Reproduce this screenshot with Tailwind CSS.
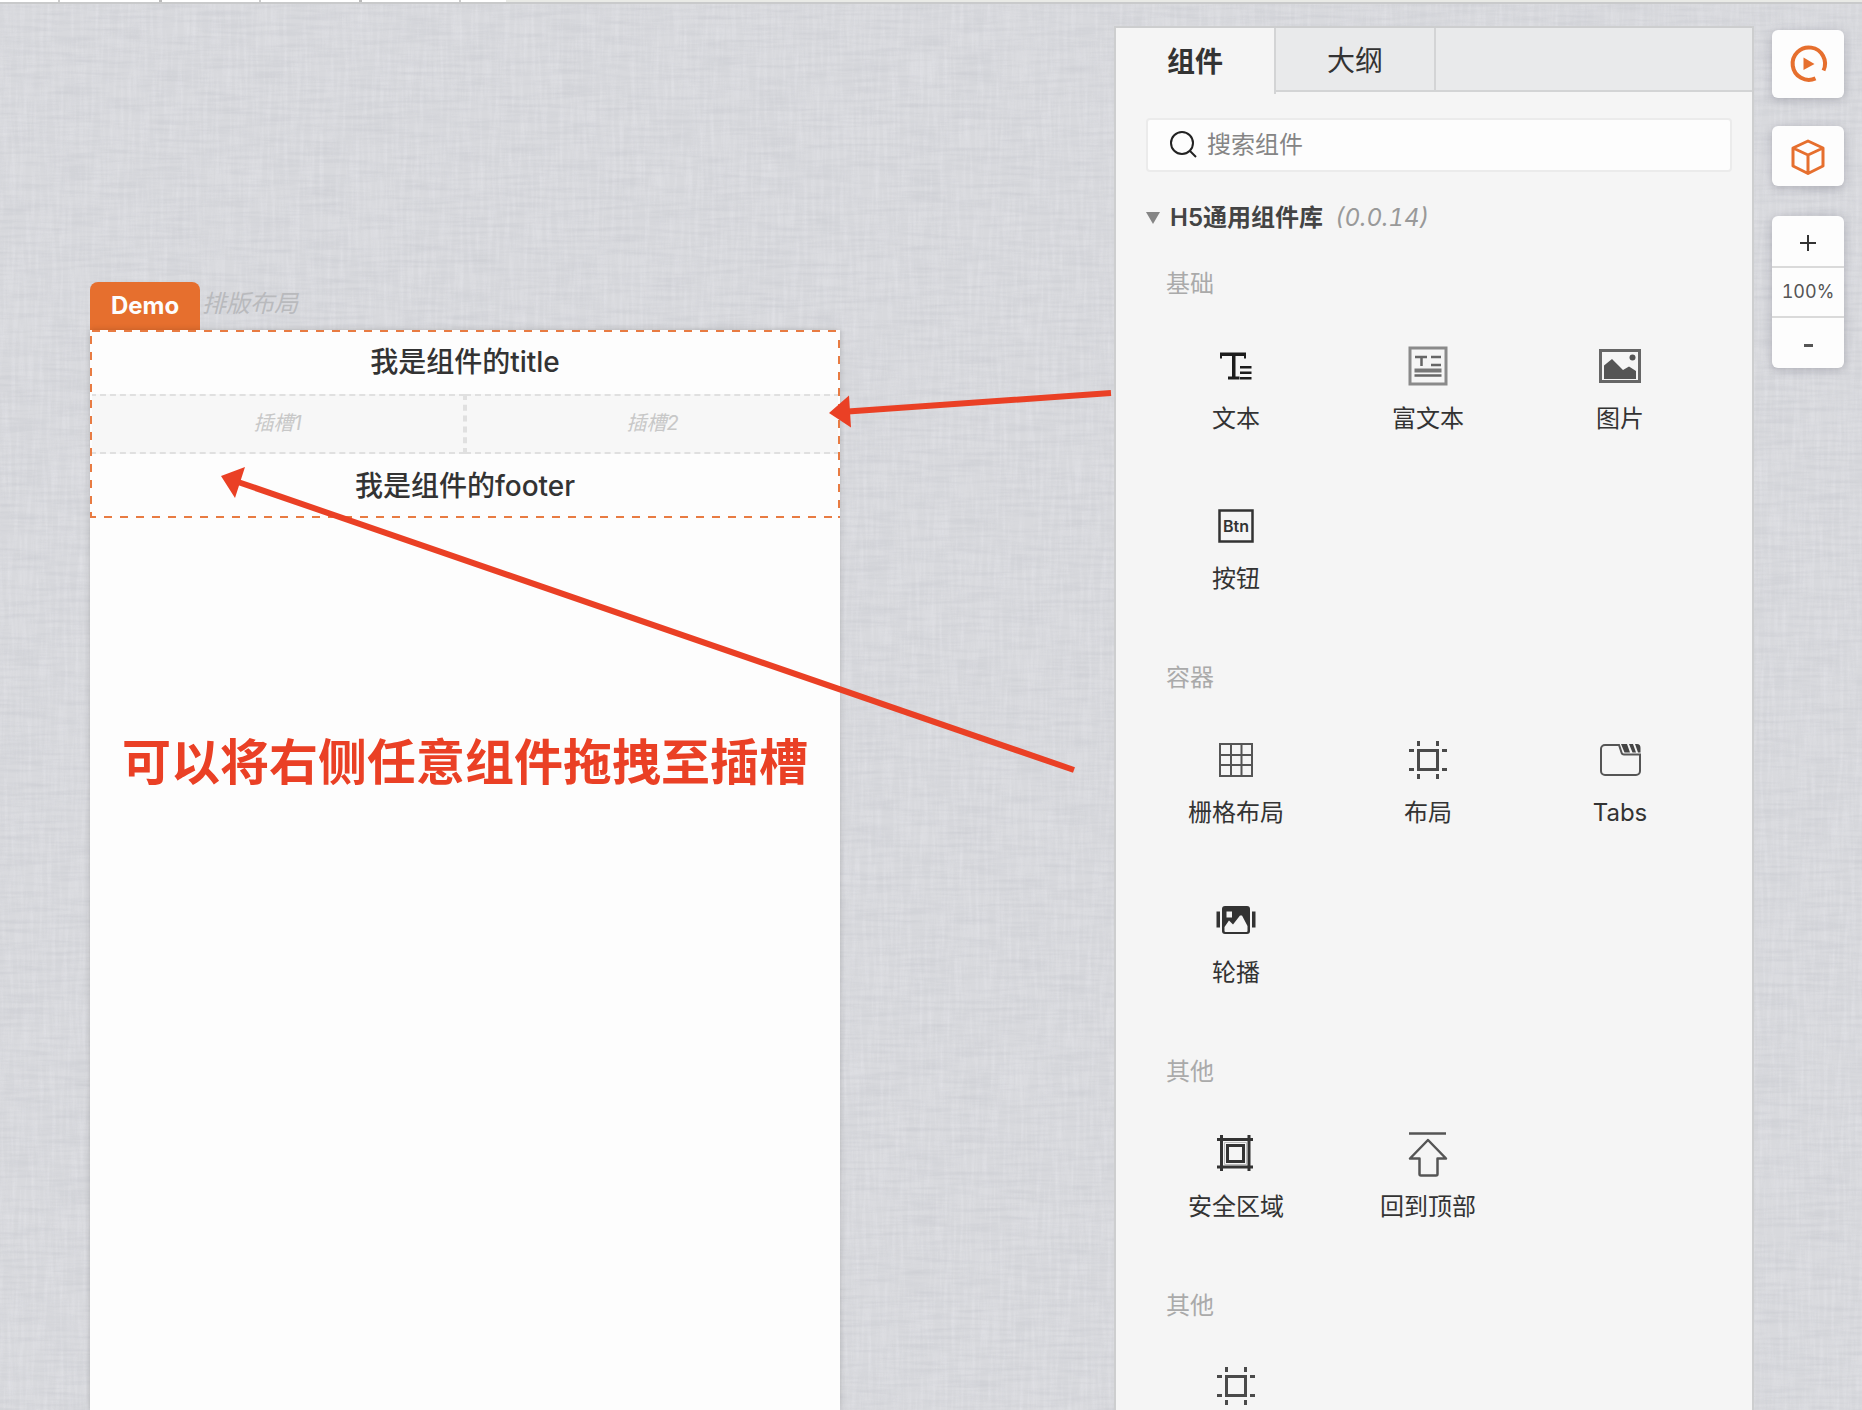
<!DOCTYPE html>
<html lang="zh-CN">
<head>
<meta charset="utf-8">
<title>Demo</title>
<script src="https://cdn.jsdelivr.net/npm/@tailwindcss/browser@4"></script>
</head>
<body class="relative h-screen min-h-[900px] overflow-hidden bg-[#d8d9dd] font-['Inter','Noto_Sans_CJK_SC',sans-serif] text-[#333]">

<!-- linen texture of the canvas -->
<svg class="absolute inset-0 size-full" aria-hidden="true" color-interpolation-filters="sRGB">
  <filter id="weft" x="0" y="0" width="100%" height="100%"><feTurbulence type="fractalNoise" baseFrequency="0.02 0.25" numOctaves="3" seed="4"/><feColorMatrix values="0 0 0 0 0.66  0 0 0 0 0.67  0 0 0 0 0.71  0.9 0 0 0 -0.35"/></filter>
  <filter id="warp" x="0" y="0" width="100%" height="100%"><feTurbulence type="fractalNoise" baseFrequency="0.25 0.02" numOctaves="3" seed="9"/><feColorMatrix values="0 0 0 0 0.95  0 0 0 0 0.95  0 0 0 0 0.97  0.9 0 0 0 -0.35"/></filter>
  <rect width="100%" height="100%" filter="url(#warp)" opacity="0.6"/>
  <rect width="100%" height="100%" filter="url(#weft)" opacity="0.4"/>
</svg>

<svg class="hidden">
  <symbol id="i-layout" viewBox="0 0 48 48"><g fill="none" stroke="#4a4a4a" stroke-width="3"><path d="M14.500 14.500h19v19h-19z"/><path d="M14.500 5v5M33.500 5v5M14.500 38v5M33.500 38v5M5 14.500h5M38 14.500h5M5 33.500h5M38 33.500h5"/></g></symbol>
</svg>

<div class="relative flex h-full flex-col">
  <header class="flex h-1 shrink-0 border-b-2 border-[#c9cacb] bg-[#e9eae6]">
    <div class="flex w-[506px] bg-white pl-[58px]">
      <i class="w-[101px] border-l-2 border-[#ccc]"></i><i class="w-[100px] border-l-3 border-[#bbb]"></i><i class="w-[100px] border-l-2 border-[#ccc]"></i><i class="w-[100px] border-l-3 border-[#bbb]"></i><i class="border-l-2 border-[#ccc]"></i>
    </div>
  </header>

  <div class="flex min-h-0 grow justify-between pr-[18px] pl-[90px]">
    <main class="flex w-[750px] shrink-0 flex-col pt-[278px]">
      <div class="flex h-12 shrink-0 items-center gap-0.5">
        <div class="flex h-full w-[110px] items-center justify-center rounded-t-lg bg-[#e66f2e] text-2xl font-bold text-[#fdfdfd]">Demo</div>
        <span class="pb-1 text-2xl text-[#b9babd] italic">排版布局</span>
      </div>
      <div class="grow bg-[#fdfdfd] shadow-[0_0_6px_rgba(0,0,0,0.18)]">
        <section class="relative h-[188px] text-center">
          <h1 class="h-16 text-[28px] leading-16 font-medium">我是组件的title</h1>
          <div class="grid h-[60px] grid-cols-2 bg-[#f7f7f7] text-xl leading-[54px] text-[#c8c8c8] italic">
            <div class="border-2 border-dashed border-[#e0e0e0]">插槽1</div>
            <div class="border-2 border-dashed border-[#e0e0e0]">插槽2</div>
          </div>
          <p class="h-16 text-[28px] leading-16 font-medium">我是组件的footer</p>
          <!-- selection outline -->
          <svg class="absolute inset-0 size-full" viewBox="0 0 750 188" fill="none" stroke-width="2" aria-hidden="true">
            <path d="M1 0V188M749 0V188" stroke="#fdfdfd"/>
            <g stroke="#e87b42" stroke-dasharray="8 8"><path d="M2 1H750M1 6V188M-2 187H750M749 10V188"/></g>
          </svg>
        </section>
        <p class="mt-[209px] text-center text-[49px] leading-[72px] font-bold whitespace-nowrap text-[#ea4025]">可以将右侧任意组件拖拽至插槽</p>
      </div>
    </main>

    <div class="flex shrink-0 gap-[18px]">
      <aside class="mt-[22px] w-[640px] overflow-hidden border-2 border-b-0 border-[#cdcecf] bg-[#f5f5f5]">
        <div role="tablist" class="flex h-16 bg-[#e9eaeb] text-[28px]">
          <button role="tab" aria-selected="true" class="h-[66px] w-40 border-r-2 border-[#d3d4d5] bg-[#f5f5f5] pt-0.5 font-semibold">组件</button>
          <button role="tab" aria-selected="false" class="w-40 border-r-2 border-b-2 border-[#d3d4d5] pt-1">大纲</button>
          <div class="grow border-b-2 border-[#d3d4d5]"></div>
        </div>

        <div class="pt-[26px] pr-5 pl-[30px]">
          <label class="flex h-[54px] items-center gap-[7px] rounded border-2 border-[#ebebeb] bg-[#fdfdfd] pl-5">
            <svg class="size-8" viewBox="0 0 32 32" fill="none" stroke="#222" stroke-width="2"><circle cx="14" cy="14" r="11"/><path d="M21.500 21.500l6.500 6.500"/></svg>
            <input type="search" aria-label="搜索组件" placeholder="搜索组件" class="min-w-0 grow bg-transparent text-2xl outline-none placeholder:text-[#858585]">
          </label>
        </div>

        <button class="mt-7 flex h-9 items-center pl-[30px] text-2xl text-[#444]">
          <svg class="mr-[10px] h-3 w-[14px]" viewBox="0 0 14 12"><path d="M0 0h14L7 12z" fill="#858585"/></svg>
          <span class="font-semibold">H5通用组件库</span><span class="ml-3 text-[#999] italic tabular-nums">(0.0.14)</span>
        </button>

        <div class="px-6 pt-9 text-2xl leading-6">
          <section class="mb-[18px]">
            <h2 class="mb-8 pl-[26px] text-[#aaa]">基础</h2>
            <ul class="grid auto-rows-[160px] grid-cols-[repeat(3,192px)]">
              <li class="flex flex-col items-center gap-[17px] pt-[14px]">
                <svg class="size-12 shrink-0" viewBox="0 0 48 48" fill="#1c1c1c"><path d="M8 10.500h26v6h-2v-2.500h-8.500v20.500h4v3H16v-3h4V14H10v2.500H8zM28 24h11.500v2.500H28zM28 29.500h11.500V32H28zM28 35h11.500v2.500H28z"/></svg>文本</li>
              <li class="flex flex-col items-center gap-[17px] pt-[14px]">
                <svg class="size-12 shrink-0" viewBox="0 0 48 48" fill="none" stroke="#666" stroke-width="2.500"><path d="M6 6h36v36H6z" stroke="#8a8a8a" stroke-width="3"/><path d="M11 15h12M17.500 15v9M27 15h10M27 23h10M10.500 33.500h27"/><path d="M10.500 28.500h27" stroke-width="4" stroke="#777"/></svg>富文本</li>
              <li class="flex flex-col items-center gap-[17px] pt-[14px]">
                <svg class="size-12 shrink-0" viewBox="0 0 48 48" fill="#555"><path d="M4.500 8.500h39v31h-39z" fill="none" stroke="#666" stroke-width="3"/><path d="M8 37V23.500L16 17l11 11 6-3.500 7 4.500v8z"/><circle cx="36.500" cy="15.500" r="3"/></svg>图片</li>
              <li class="flex flex-col items-center gap-[17px] pt-[14px]">
                <svg class="size-12 shrink-0" viewBox="0 0 48 48"><path d="M7.500 8.500h33v31h-33z" fill="none" stroke="#333" stroke-width="2.500"/><text x="24" y="30" text-anchor="middle" font-size="16" font-weight="600" fill="#333">Btn</text></svg>按钮</li>
            </ul>
          </section>

          <section class="mb-[18px]">
            <h2 class="mb-8 pl-[26px] text-[#aaa]">容器</h2>
            <ul class="grid auto-rows-[160px] grid-cols-[repeat(3,192px)]">
              <li class="flex flex-col items-center gap-[17px] pt-[14px]">
                <svg class="size-12 shrink-0" viewBox="0 0 48 48" fill="none" stroke="#555" stroke-width="2"><path d="M8 8h32v32H8zM19 8v32M29.500 8v32M8 19h32M8 29h32"/></svg>栅格布局</li>
              <li class="flex flex-col items-center gap-[17px] pt-[14px]"><svg class="size-12 shrink-0"><use href="#i-layout"/></svg>布局</li>
              <li class="flex flex-col items-center gap-[17px] pt-[14px]">
                <svg class="size-12 shrink-0" viewBox="0 0 48 48" fill="none" stroke="#555" stroke-width="2"><path d="M23 9H9a4 4 0 0 0-4 4v22a4 4 0 0 0 4 4h31a4 4 0 0 0 4-4V18.500H28q-2 0-2.500-2z"/><path d="M25 8h6l3 8.500h-5.500zM33 8h4l3 8.500h-3.500zM39 8h2q3.500 0 3.500 4v4.500H42z" fill="#444" stroke="none"/></svg>Tabs</li>
              <li class="flex flex-col items-center gap-[17px] pt-[14px]">
                <svg class="size-12 shrink-0" viewBox="0 0 48 48" fill="#333"><rect x="10" y="10" width="28" height="28" rx="3"/><path d="M4.500 15.500H8v16H4.500zM40 15.500h3.500v16H40z"/><path d="M12.500 31L17 24.500l4 4L28 19.500l2 0 5.500 10.500v5q0 1-1 1h-21q-1 0-1-1zM14.500 15.500h5.500v6h-5.500z" fill="#f5f5f5"/></svg>轮播</li>
            </ul>
          </section>

          <section class="mb-[18px]">
            <h2 class="mb-8 pl-[26px] text-[#aaa]">其他</h2>
            <ul class="grid auto-rows-[160px] grid-cols-[repeat(3,192px)]">
              <li class="flex flex-col items-center gap-[17px] pt-[14px]">
                <svg class="size-12 shrink-0" viewBox="0 0 48 48" fill="none" stroke="#333" stroke-width="3"><path d="M5 9.500h36M5 37h36M9.500 5v36M37 5v36M15.500 15.500h16v16h-16z"/><path d="M12.500 12.500h22v22h-22z" stroke="#bbb" stroke-width="1"/></svg>安全区域</li>
              <li class="flex flex-col items-center gap-[17px] pt-[14px]">
                <svg class="size-12 shrink-0" viewBox="0 0 48 48" fill="none" stroke="#555" stroke-width="2.500" stroke-linejoin="round"><path d="M5 3.500h37M24 10L6 28.500h9.500V44q0 1.500 1.500 1.500h15q1.500 0 1.500-1.500V28.500H42z"/></svg>回到顶部</li>
            </ul>
          </section>

          <section>
            <h2 class="mb-8 pl-[26px] text-[#aaa]">其他</h2>
            <ul class="grid grid-cols-[repeat(3,192px)]">
              <li class="flex justify-center pt-3"><svg class="size-12 shrink-0"><use href="#i-layout"/></svg></li>
            </ul>
          </section>
        </div>
      </aside>

      <nav class="flex w-[72px] flex-col pt-[26px]">
        <button aria-label="预览" class="flex h-[68px] items-center justify-center rounded-md bg-[#fdfdfd] shadow-[0_2px_10px_rgba(60,60,80,0.28)]">
          <svg class="size-12" viewBox="0 0 48 48"><path d="M39.500 30.500A16.200 16.200 0 1 0 31.500 38.400" fill="none" stroke="#e66f2e" stroke-width="4"/><path d="M19.500 17.500L30.500 24l-11 6z" fill="#e66f2e"/></svg>
        </button>
        <button aria-label="组件包" class="mt-7 flex h-[60px] items-center justify-center rounded-md bg-[#fdfdfd] shadow-[0_2px_10px_rgba(60,60,80,0.28)]">
          <svg class="size-12" viewBox="0 0 48 48" fill="none" stroke="#e66f2e" stroke-width="3" stroke-linejoin="round"><path d="M24 9l15 7v18l-15 7.500L9 34V16zM9 16l15 7 15-7M24 23v18"/></svg>
        </button>
        <div class="mt-[30px] flex flex-col rounded-md bg-[#fdfdfd] text-lg text-[#555] shadow-[0_2px_10px_rgba(60,60,80,0.28)]">
          <button aria-label="放大" class="flex h-[50px] items-center justify-center pt-1"><svg class="size-4" viewBox="0 0 16 16" stroke="#333" stroke-width="2"><path d="M8 0v16M0 8h16"/></svg></button>
          <div class="flex h-[52px] items-center justify-center border-y-2 border-[#dadada] tabular-nums">100%</div>
          <button aria-label="缩小" class="flex h-[50px] items-center justify-center pt-1"><svg class="h-[3px] w-[9px]" viewBox="0 0 9 3"><path d="M0 0h9v3H0z" fill="#555"/></svg></button>
        </div>
      </nav>
    </div>
  </div>
</div>

<!-- annotation arrows -->
<svg class="pointer-events-none absolute top-0 left-0 h-[800px] w-[1120px]" viewBox="0 0 1120 800" fill="#ea4025" stroke="#ea4025" aria-hidden="true">
  <path d="M1111 393L848 411.500M1074 770L238 482" stroke-width="6"/>
  <path d="M829 413l20-17.500 2 32zM221 476l24-9-10 31z" stroke="none"/>
</svg>
</body>
</html>
